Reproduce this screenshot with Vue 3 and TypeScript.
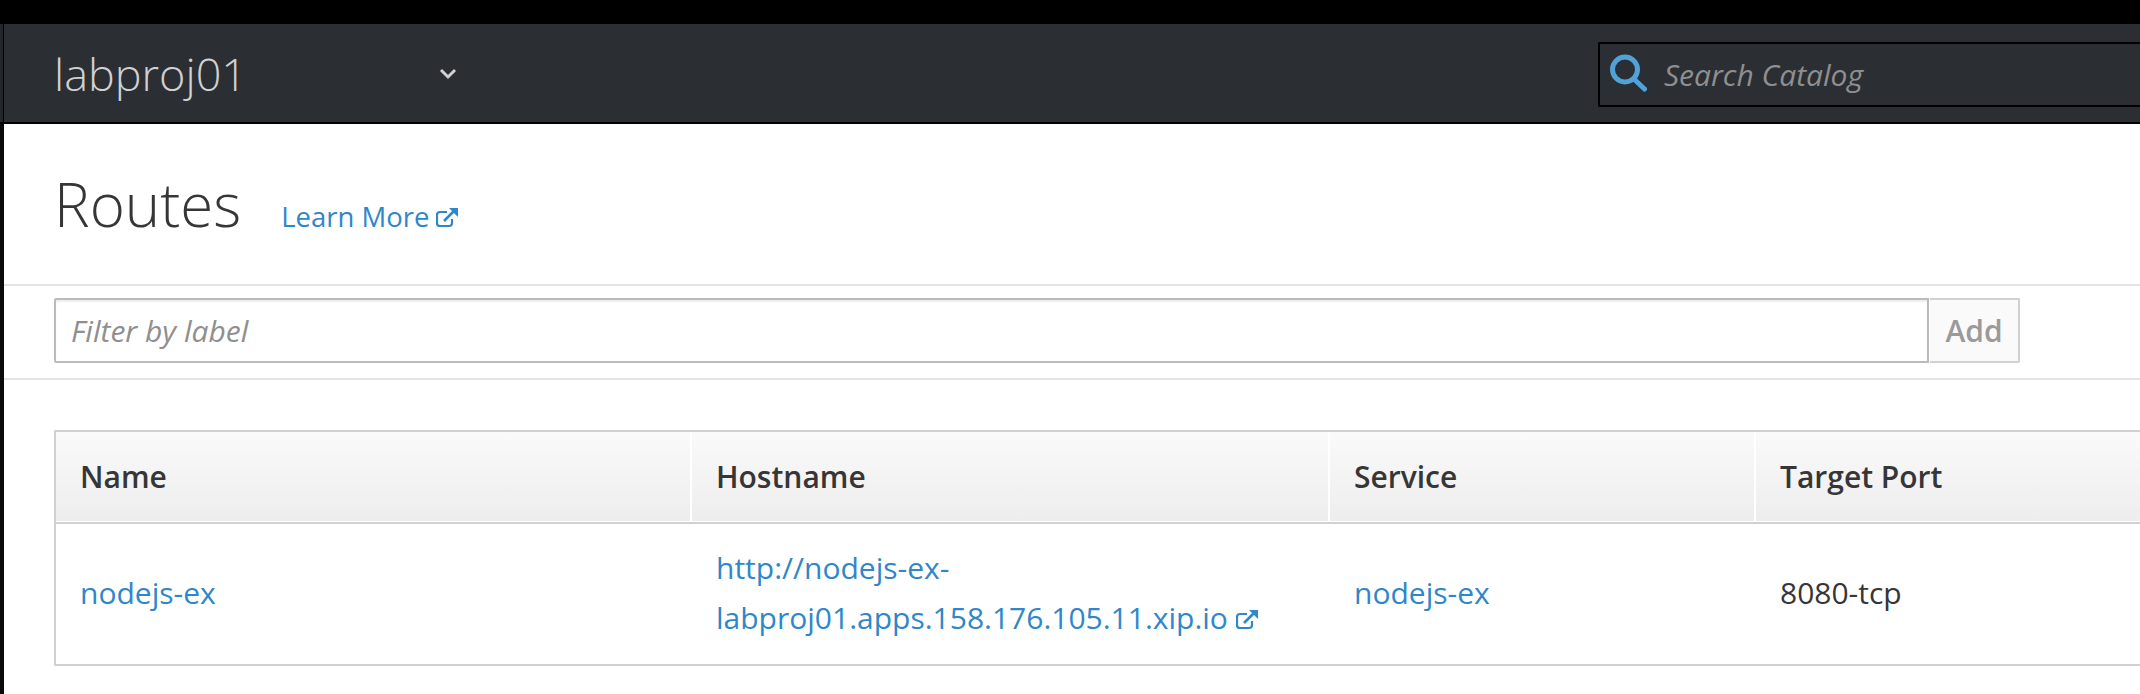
<template>
  <div class="page">
    <div class="topbar"></div>
    <header class="nav">
      <div class="project">
        <span class="project-name">labproj01</span>
        <svg class="chevron" width="18" height="12" viewBox="0 0 18 12">
          <path d="M2 2l7 7 7-7" fill="none" stroke="#d1d1d1" stroke-width="3" />
        </svg>
      </div>
      <div class="search">
        <svg class="search-icon" width="38" height="40" viewBox="0 0 38 40">
          <circle cx="15" cy="15.500" r="12.500" fill="none" stroke="#4fa3d8" stroke-width="5" />
          <path d="M25 26l9.500 9" fill="none" stroke="#4fa3d8" stroke-width="5" stroke-linecap="round" />
        </svg>
        <span class="search-text">Search Catalog</span>
      </div>
    </header>

    <main class="content">
      <div class="title-row">
        <h1>Routes</h1>
        <a class="learn">Learn More
          <svg class="ext" width="22" height="20" viewBox="0 0 22 20">
            <path d="M16 11v4a3 3 0 0 1-3 3H4a3 3 0 0 1-3-3V7a3 3 0 0 1 3-3h7" fill="none" stroke="currentColor" stroke-width="2.2" />
            <path d="M8 13L18 3" fill="none" stroke="currentColor" stroke-width="2.6" />
            <path d="M13 0h9v9z" fill="currentColor" />
          </svg>
        </a>
      </div>

      <div class="filter-bar">
        <div class="filter-input">Filter by label</div>
        <button class="add">Add</button>
      </div>

      <div class="table-wrap">
        <div class="row head">
          <div v-for="col in columns" :key="col" class="cell">{{ col }}</div>
        </div>
        <div class="row body">
          <div class="cell"><a>nodejs-ex</a></div>
          <div class="cell">
            <a>http://nodejs-ex-<br />labproj01.apps.158.176.105.11.xip.io
              <svg class="ext" width="22" height="20" viewBox="0 0 22 20">
                <path d="M16 11v4a3 3 0 0 1-3 3H4a3 3 0 0 1-3-3V7a3 3 0 0 1 3-3h7" fill="none" stroke="currentColor" stroke-width="2.2" />
                <path d="M8 13L18 3" fill="none" stroke="currentColor" stroke-width="2.6" />
                <path d="M13 0h9v9z" fill="currentColor" />
              </svg>
            </a>
          </div>
          <div class="cell"><a>nodejs-ex</a></div>
          <div class="cell">8080-tcp</div>
        </div>
      </div>
    </main>
  </div>
</template>

<script setup lang="ts">
const columns: string[] = ['Name', 'Hostname', 'Service', 'Target Port']
</script>

<style scoped>
.page {
  width: 2140px;
  height: 694px;
  overflow: hidden;
  background: #fff;
  font-family: "Open Sans", "Noto Sans", sans-serif;
  font-size: 30px;
  color: #363636;
}

.topbar {
  height: 24px;
  background: #000;
}

.nav {
  height: 98px;
  display: flex;
  align-items: center;
  justify-content: space-between;
  background: linear-gradient(90deg, #23262a 3px, #000 3px, #000 4px, #2b2e33 4px);
  border-bottom: 2px solid #000;
  padding-left: 54px;
}

.project {
  display: flex;
  align-items: center;
  width: 403px;
  justify-content: space-between;
}

.project-name {
  font-size: 45px;
  font-weight: 300;
  color: #d1d1d1;
}

.chevron {
  margin-top: 2px;
}

.search {
  width: 542px;
  height: 65px;
  margin-top: 2px;
  box-sizing: border-box;
  display: flex;
  align-items: center;
  gap: 16px;
  padding-left: 10px;
  border: 2px solid #000;
  border-right: none;
  border-radius: 2px 0 0 2px;
}

.search-text {
  font-style: italic;
  color: #8f8f8f;
}

.content {
  border-left: 4px solid #0a0a0a;
  height: 570px;
}

.title-row {
  height: 162px;
  box-sizing: border-box;
  display: flex;
  align-items: baseline;
  gap: 40px;
  padding: 38px 0 0 50px;
  border-bottom: 2px solid #e3e3e3;
}

h1 {
  margin: 0;
  font-size: 60px;
  font-weight: 300;
  line-height: 1.4;
  color: #363636;
}

a {
  color: #2f87c9;
}

.learn {
  font-size: 27.5px;
}

.learn .ext {
  margin-left: -1px;
}

.ext {
  vertical-align: -1px;
}

.filter-bar {
  height: 94px;
  box-sizing: border-box;
  display: flex;
  align-items: flex-start;
  padding: 12px 0 0 50px;
  border-bottom: 2px solid #e3e3e3;
}

.filter-input {
  width: 1875px;
  height: 65px;
  box-sizing: border-box;
  display: flex;
  align-items: center;
  padding-left: 15px;
  font-style: italic;
  color: #8f8f8f;
  border: 2px solid #bbb;
  border-radius: 2px 0 0 2px;
  box-shadow: inset 0 2px 2px #eee;
}

.add {
  width: 90px;
  height: 65px;
  box-sizing: border-box;
  margin-left: 1px;
  font: 600 30px "Open Sans", sans-serif;
  color: #9a9a9a;
  background: #fafafa;
  border: 2px solid #d1d1d1;
  border-left: none;
  border-radius: 0 2px 2px 0;
}

.table-wrap {
  margin: 50px 0 0 50px;
  width: 2100px;
  height: 236px;
  box-sizing: border-box;
  border: 2px solid #d1d1d1;
  border-right: none;
}

.row {
  display: grid;
  grid-template-columns: 636px 638px 426px 1fr;
}

.head {
  height: 92px;
  box-sizing: border-box;
  border-bottom: 2px solid #d1d1d1;
  background: linear-gradient(#fafafa, #ededed);
  font-weight: 600;
}

.head .cell {
  display: flex;
  align-items: center;
  padding-left: 24px;
  border-right: 2px solid #fff;
  border-bottom: 1px solid #fff;
}

.body {
  height: 140px;
}

.body .cell {
  display: flex;
  align-items: center;
  padding: 0 0 2px 24px;
  line-height: 50px;
}
</style>

<style>
html, body {
  margin: 0;
  background: #fff;
}
</style>
